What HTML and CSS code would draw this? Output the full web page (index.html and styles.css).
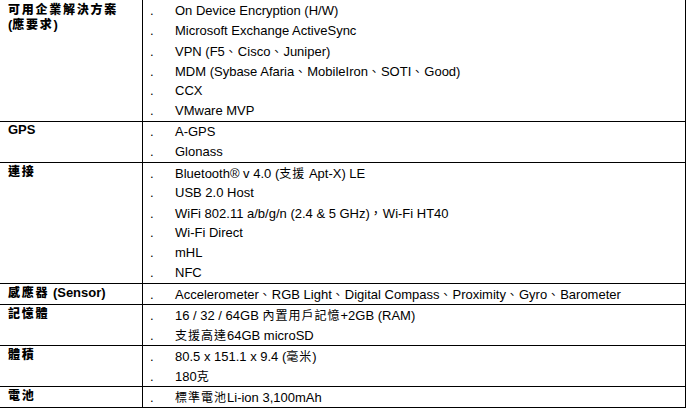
FILE: index.html
```html
<!DOCTYPE html>
<html lang="zh-Hant">
<head>
<meta charset="utf-8">
<title>規格</title>
<link rel="stylesheet" href="styles.css">
</head>
<body>
<table class="spec">
  <tbody>
    <tr>
      <th class="label"><span class="lcjk">可用企業解決方案</span><br>(<span class="lcjk">應要求</span>)</th>
      <td class="items">
        <div class="item"><span class="dot">.</span><span>On Device Encryption (H/W)</span></div>
        <div class="item"><span class="dot">.</span><span>Microsoft Exchange ActiveSync</span></div>
        <div class="item"><span class="dot">.</span><span>VPN (F5<span class="cjk">、</span>Cisco<span class="cjk">、</span>Juniper)</span></div>
        <div class="item"><span class="dot">.</span><span>MDM (Sybase Afaria<span class="cjk">、</span>MobileIron<span class="cjk">、</span>SOTI<span class="cjk">、</span>Good)</span></div>
        <div class="item"><span class="dot">.</span><span>CCX</span></div>
        <div class="item"><span class="dot">.</span><span>VMware MVP</span></div>
      </td>
    </tr>
    <tr>
      <th class="label">GPS</th>
      <td class="items">
        <div class="item"><span class="dot">.</span><span>A-GPS</span></div>
        <div class="item"><span class="dot">.</span><span>Glonass</span></div>
      </td>
    </tr>
    <tr>
      <th class="label"><span class="lcjk">連接</span></th>
      <td class="items">
        <div class="item"><span class="dot">.</span><span>Bluetooth® v 4.0 (<span class="cjk">支援</span> Apt-X) LE</span></div>
        <div class="item"><span class="dot">.</span><span>USB 2.0 Host</span></div>
        <div class="item"><span class="dot">.</span><span>WiFi 802.11 a/b/g/n (2.4 &amp; 5 GHz)<span class="cjk">，</span>Wi-Fi HT40</span></div>
        <div class="item"><span class="dot">.</span><span>Wi-Fi Direct</span></div>
        <div class="item"><span class="dot">.</span><span>mHL</span></div>
        <div class="item"><span class="dot">.</span><span>NFC</span></div>
      </td>
    </tr>
    <tr>
      <th class="label"><span class="lcjk">感應器</span> (Sensor)</th>
      <td class="items">
        <div class="item"><span class="dot">.</span><span>Accelerometer<span class="cjk">、</span>RGB Light<span class="cjk">、</span>Digital Compass<span class="cjk">、</span>Proximity<span class="cjk">、</span>Gyro<span class="cjk">、</span>Barometer</span></div>
      </td>
    </tr>
    <tr>
      <th class="label"><span class="lcjk">記憶體</span></th>
      <td class="items">
        <div class="item"><span class="dot">.</span><span>16 / 32 / 64GB <span class="cjk">內置用戶記憶</span>+2GB (RAM)</span></div>
        <div class="item"><span class="dot">.</span><span><span class="cjk">支援高達</span>64GB microSD</span></div>
      </td>
    </tr>
    <tr>
      <th class="label"><span class="lcjk">體積</span></th>
      <td class="items">
        <div class="item"><span class="dot">.</span><span>80.5 x 151.1 x 9.4 (<span class="cjk">毫米</span>)</span></div>
        <div class="item"><span class="dot">.</span><span>180<span class="cjk">克</span></span></div>
      </td>
    </tr>
    <tr>
      <th class="label"><span class="lcjk">電池</span></th>
      <td class="items">
        <div class="item"><span class="dot">.</span><span><span class="cjk">標準電池</span>Li-ion 3,100mAh</span></div>
      </td>
    </tr>
  </tbody>
</table>
</body>
</html>
```

FILE: styles.css
```css
html, body {
  margin: 0;
  padding: 0;
  background: #ffffff;
}

body {
  font-family: "Liberation Sans", Arial, "Noto Sans CJK TC", sans-serif;
  color: #000000;
  overflow: hidden;
}

.spec {
  border-collapse: collapse;
  margin: 0 0 0 -1px;
  width: 687px;
  table-layout: fixed;
}

.spec th,
.spec td {
  border: 1px solid #000000;
  vertical-align: top;
  padding: 0;
}

.spec tr:first-child > th,
.spec tr:first-child > td {
  border-top-color: transparent;
}

.spec .label {
  width: 134px;
  padding: 1px 0 0 8px;
  text-align: left;
  font-weight: bold;
  font-size: 13px;
  line-height: 14px;
}

.lcjk {
  font-family: "Noto Sans CJK TC", sans-serif;
  font-weight: 900;
  font-size: 12px;
  line-height: 14px;
  letter-spacing: 1.75px;
}

.spec .items {
  padding: 0 0 0 7px;
}

.item {
  display: flex;
  height: 20px;
  align-items: baseline;
  font-size: 13px;
  line-height: 20px;
  white-space: nowrap;
}

.dot {
  width: 25px;
  flex: none;
}

.cjk {
  font-family: "Noto Sans CJK TC", sans-serif;
  font-size: 12px;
  letter-spacing: 1px;
}
```
